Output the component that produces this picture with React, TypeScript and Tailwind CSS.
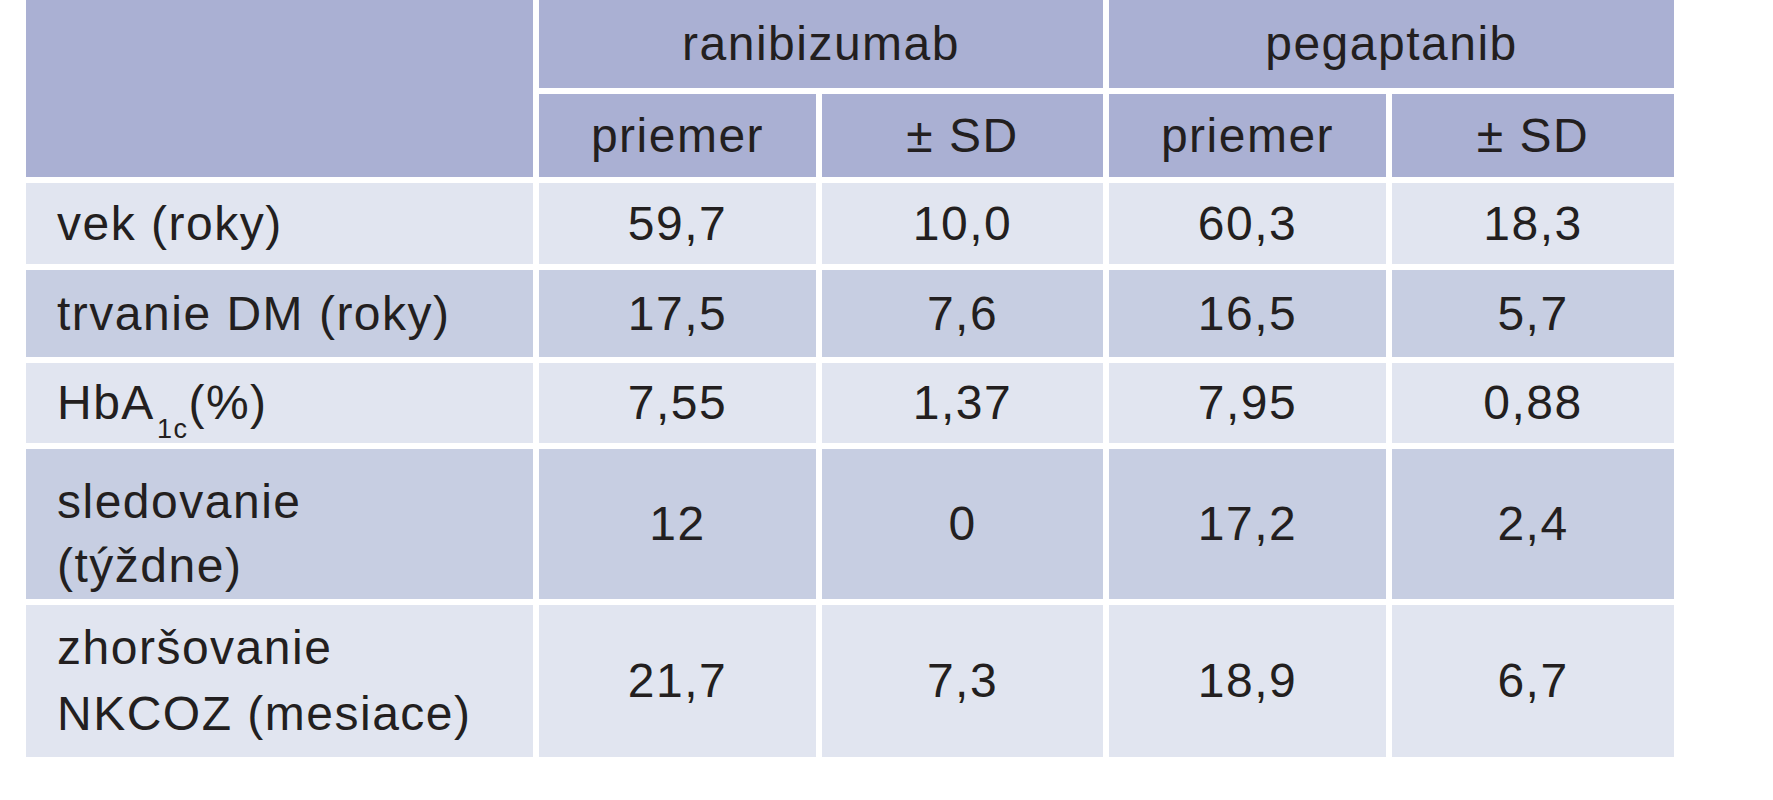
import React from 'react';

type Row = {
  label: React.ReactNode;
  values: string[];
  shade: 'light' | 'dark';
  labelClass?: string;
};

const rows: Row[] = [
  { label: 'vek (roky)', values: ['59,7', '10,0', '60,3', '18,3'], shade: 'light' },
  { label: 'trvanie DM (roky)', values: ['17,5', '7,6', '16,5', '5,7'], shade: 'dark' },
  {
    label: (
      <>
        HbA<sub className="text-[27px] relative top-[8px] align-sub ml-[2px]">1c</sub>(%)
      </>
    ),
    values: ['7,55', '1,37', '7,95', '0,88'],
    shade: 'light',
  },
  {
    label: (
      <>
        sledovanie
        <br />
        (týždne)
      </>
    ),
    values: ['12', '0', '17,2', '2,4'],
    shade: 'dark',
    labelClass: 'pt-[20px] leading-[64px]',
  },
  {
    label: (
      <>
        zhoršovanie
        <br />
        NKCOZ (mesiace)
      </>
    ),
    values: ['21,7', '7,3', '18,9', '6,7'],
    shade: 'light',
  },
];

export default function App() {
  const head = 'bg-[#aab0d3] flex items-center justify-center';

  return (
    <div className="min-h-screen bg-white text-[#231f20] font-['Liberation_Sans',Arial,sans-serif] text-[48px] leading-[66px] tracking-[1.5px]">
      <div className="ml-[26px] grid w-max grid-cols-[507px_277px_281px_277px_282px] grid-rows-[88px_83px_81px_87px_80px_150px_152px] gap-[6px]">
        <div className="bg-[#aab0d3] row-span-2" />
        <div className={`${head} col-span-2`}>ranibizumab</div>
        <div className={`${head} col-span-2`}>pegaptanib</div>
        <div className={head}>priemer</div>
        <div className={head}>± SD</div>
        <div className={head}>priemer</div>
        <div className={head}>± SD</div>

        {rows.map((row, i) => {
          const bg = row.shade === 'light' ? 'bg-[#e1e5f0]' : 'bg-[#c7cee2]';
          return (
            <React.Fragment key={i}>
              <div className={`${bg} flex items-center pl-[31px]`}>
                <div className={row.labelClass}>{row.label}</div>
              </div>
              {row.values.map((v, j) => (
                <div key={j} className={`${bg} flex items-center justify-center`}>
                  {v}
                </div>
              ))}
            </React.Fragment>
          );
        })}
      </div>
    </div>
  );
}
